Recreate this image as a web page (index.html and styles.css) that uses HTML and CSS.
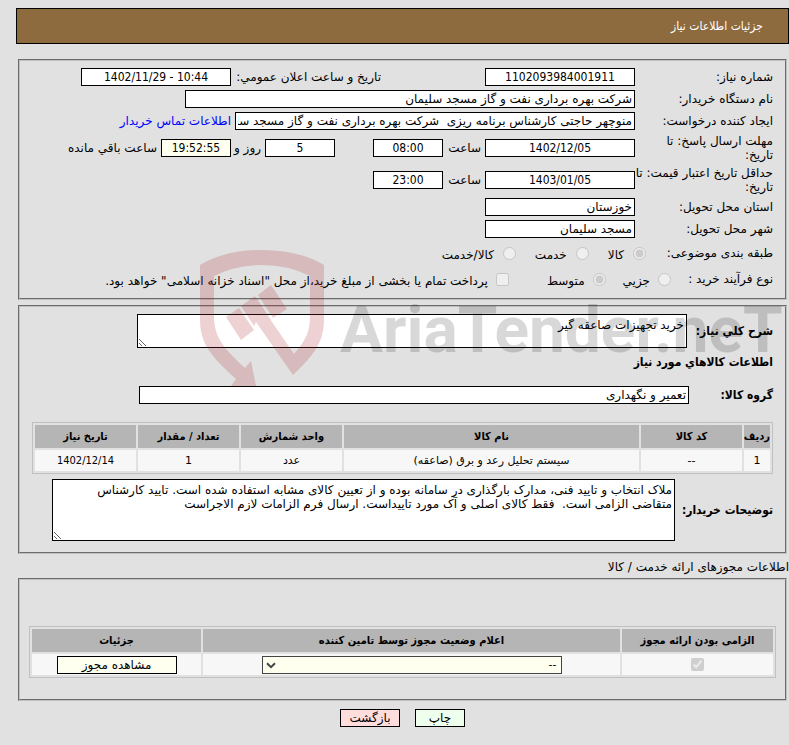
FILE: index.html
```html
<!DOCTYPE html>
<html lang="fa" dir="rtl">
<head>
<meta charset="utf-8">
<title>جزئیات اطلاعات نیاز</title>
<link rel="stylesheet" href="styles.css">
</head>
<body>
<main class="page">
  <h1 class="title">جزئیات اطلاعات نیاز</h1>

  <fieldset class="panel summary">
    <div class="row">
      <label class="name" for="number">شماره نیاز:</label>
      <input class="box date" id="number" value="1102093984001911" readonly>
      <label class="announce" for="announced">تاریخ و ساعت اعلان عمومي:</label>
      <input class="box date" id="announced" value="10:44 - 1402/11/29" dir="rtl" readonly>
    </div>
    <div class="row">
      <label class="name" for="buyer">نام دستگاه خریدار:</label>
      <input class="box buyer" id="buyer" value="شرکت بهره برداری نفت و گاز مسجد سلیمان" readonly>
    </div>
    <div class="row">
      <label class="name" for="creator">ایجاد کننده درخواست:</label>
      <input class="box creator" id="creator" value="منوچهر حاجتی کارشناس برنامه ریزی  شرکت بهره برداری نفت و گاز مسجد سلیمان" readonly>
      <a class="contact" href="#contact">اطلاعات تماس خریدار</a>
    </div>
    <div class="row">
      <label class="name" for="deadline">مهلت ارسال پاسخ: تا تاریخ:</label>
      <input class="box date" id="deadline" value="1402/12/05" readonly>
      <label class="hour" for="deadline-hour">ساعت</label>
      <input class="box short" id="deadline-hour" value="08:00" readonly>
      <input class="box short days" id="days" value="5" aria-label="روز" readonly>
      <label class="and" for="days">روز و</label>
      <input class="box short ivory" id="remaining" value="19:52:55" readonly>
      <label for="remaining">ساعت باقي مانده</label>
    </div>
    <div class="row">
      <label class="name" for="validity">حداقل تاریخ اعتبار قیمت: تا تاریخ:</label>
      <input class="box date" id="validity" value="1403/01/05" readonly>
      <label class="hour" for="validity-hour">ساعت</label>
      <input class="box short" id="validity-hour" value="23:00" readonly>
    </div>
    <div class="row">
      <label class="name" for="province">استان محل تحویل:</label>
      <input class="box place" id="province" value="خوزستان" readonly>
    </div>
    <div class="row">
      <label class="name" for="city">شهر محل تحویل:</label>
      <input class="box place" id="city" value="مسجد سلیمان" readonly>
    </div>
    <div class="row options" role="group" aria-labelledby="subject">
      <span class="subject" id="subject">طبقه بندی موضوعی:</span>
      <label class="option"><input type="radio" name="subject" checked disabled><span>کالا</span></label>
      <label class="option"><input type="radio" name="subject" disabled><span>خدمت</span></label>
      <label class="option"><input type="radio" name="subject" disabled><span>کالا/خدمت</span></label>
    </div>
    <div class="row options process-options" role="group" aria-labelledby="process">
      <span class="process" id="process">نوع فرآیند خرید :</span>
      <label class="option"><input type="radio" name="process" disabled><span>جزیي</span></label>
      <label class="option"><input type="radio" name="process" checked disabled><span>متوسط</span></label>
      <label class="option treasury"><input type="checkbox" disabled><span>پرداخت تمام یا بخشی از مبلغ خرید،از محل "اسناد خزانه اسلامی" خواهد بود.</span></label>
    </div>
  </fieldset>

  <fieldset class="panel goods">
    <div class="wide-row">
      <label class="description-name" for="description">شرح کلي نیاز:</label>
      <textarea class="box description" id="description" readonly>خرید تجهیزات صاعقه گیر</textarea>
    </div>
    <h2 class="subtitle">اطلاعات کالاهاي مورد نیاز</h2>
    <div class="wide-row">
      <label class="group-name" for="group">گروه کالا:</label>
      <input class="box group" id="group" value="تعمیر و نگهداری" readonly>
    </div>
    <table class="grid items">
      <colgroup><col class="c-row"><col class="c-mid"><col><col class="c-mid"><col class="c-mid"><col class="c-mid"></colgroup>
      <thead><tr><th>ردیف</th><th>کد کالا</th><th>نام کالا</th><th>واحد شمارش</th><th>تعداد / مقدار</th><th>تاریخ نیاز</th></tr></thead>
      <tbody><tr><td>1</td><td>--</td><td>سیستم تحلیل رعد و برق (صاعقه)</td><td>عدد</td><td>1</td><td class="digits">1402/12/14</td></tr></tbody>
    </table>
    <div class="wide-row">
      <label class="notes-name" for="notes">توضیحات خریدار:</label>
      <textarea class="box notes" id="notes" readonly>ملاک انتخاب و تایید فنی، مدارک بارگذاری در سامانه بوده و از تعیین کالای مشابه استفاده شده است. تایید کارشناس متقاضی الزامی است.  فقط کالای اصلی و آک مورد تاییداست. ارسال فرم الزامات لازم الاجراست</textarea>
    </div>
  </fieldset>

  <h2 class="section">اطلاعات مجوزهای ارائه خدمت / کالا</h2>
  <fieldset class="panel permits">
    <table class="grid">
      <colgroup><col class="c-required"><col><col class="c-details"></colgroup>
      <thead><tr><th>الزامی بودن ارائه مجوز</th><th>اعلام وضعیت مجوز توسط تامین کننده</th><th>جزئیات</th></tr></thead>
      <tbody><tr>
        <td><input class="tick" type="checkbox" aria-label="الزامی بودن ارائه مجوز" checked disabled></td>
        <td><span class="select-wrap"><select class="box status" aria-label="اعلام وضعیت مجوز"><option>--</option></select><svg class="chevron" viewBox="0 0 10 7" aria-hidden="true"><path d="M1 1.2 5 5.2 9 1.2"/></svg></span></td>
        <td><button class="box view" type="button">مشاهده مجوز</button></td>
      </tr></tbody>
    </table>
  </fieldset>

  <div class="actions">
    <button class="box print" type="button">چاپ</button>
    <button class="box back" type="button">بازگشت</button>
  </div>

  <svg class="watermark" viewBox="0 0 600 140" direction="ltr" aria-hidden="true">
    <g class="emblem">
      <path d="M0 15Q25 0 62 0T124 15V68C124 92 115 104 93 125L56 72 70 69 94 104C106 90 110 82 110 66V26Q88 15 62 15T14 26V66C14 86 22 97 45 118L51 111 56 136H31L36 129C7 103 0 91 0 68Z"/>
      <path d="M26 67 39 58 54 80 41 90ZM41 56 55 46 71 70 56 72 54 76ZM58 45 71 35 87 59 73 68Z"/>
    </g>
    <text class="wordmark" x="140" y="102">AriaTender.neT</text>
  </svg>
</main>
</body>
</html>
```
FILE: styles.css
```css
* { box-sizing: border-box; }

body {
  margin: 0;
  background: #e1e1e1;
  color: #000;
  font: 12px/14px "DejaVu Sans", sans-serif;
}

.page {
  position: relative;
  padding: 8px 0 18px 16px;
  overflow: hidden;
}

input, textarea, select, button { font: inherit; color: inherit; }

.title, .date, .short, .digits, .wide-row label, .subtitle, .grid th {
  font-family: "DejaVu Sans Condensed", "DejaVu Sans", sans-serif;
}

.title {
  margin: 0;
  padding: 10px 25px;
  border: 1px solid #000;
  background: #8e6b3f;
  color: #fff;
  font-size: 12px;
  font-weight: normal;
  line-height: 14px;
}

.panel {
  min-width: 0;
  margin: 0 2px;
  border: 2px groove #c0c0c0;
}

.summary {
  display: flex;
  flex-direction: column;
  gap: 4px;
  margin-top: 15px;
  padding: 7px 12px 8px;
}

.row { display: flex; align-items: center; gap: 4px; white-space: nowrap; }
.name { flex: none; width: 138px; margin-left: -4px; white-space: normal; }

.box {
  height: 18px;
  margin: 0;
  padding: 0 2px;
  border: 1px solid #000;
  border-radius: 0;
  background: #fff;
}

.date { width: 150px; text-align: center; }
.place { width: 150px; }
.buyer { width: 450px; }
.creator { width: 400px; }
.short { width: 70px; text-align: center; }
.days { margin-right: 34px; }
.ivory { background: #fffff0; }
.hour { width: 34px; }
.and { width: 26px; }
.announce { width: 146px; margin-right: 100px; }
.contact { color: #00f; text-decoration: none; }

.options { height: 22px; gap: 19px; }
.process-options { gap: 17px; }
.subject { width: 108px; }
.process { width: 85px; }
.option { display: flex; align-items: center; gap: 9px; }
.process-options .option { gap: 8px; }
.option input { width: 13px; height: 13px; margin: 0; }
.option span { padding-top: 4px; }
.treasury { margin-right: 21px; }

.goods { margin-top: 5px; padding: 7px 12px 11px; }
.wide-row { display: flex; align-items: center; gap: 4px; }
.wide-row label { flex: none; font-weight: bold; }
textarea.box { padding: 3px 2px; resize: both; }
.description-name { width: 82px; }
.description { width: 550px; height: 34px; }
.notes-name { width: 94px; }
.notes { flex: 1; height: 62px; margin-left: 20px; }
.subtitle { margin: 7px 0 17px; font-size: 12px; line-height: 14px; }
.group-name { width: 80px; }
.group { width: 550px; }

.grid {
  table-layout: fixed;
  width: 100%;
  border: 1px solid #c0c0c0;
  border-spacing: 2px;
  font-size: 11px;
  text-align: center;
}
.grid th { height: 23px; padding: 0; background: #b5b5b5; }
.grid td { height: 21px; padding: 0; background: #f7f7f7; }
.items { margin: 18px 0 5px; }
.c-row { width: 26px; }
.c-mid { width: 101px; }
.c-required { width: 151px; }
.c-details { width: 169px; }

.section { margin: 6px 0 4px; font-size: 12px; font-weight: normal; line-height: 14px; }
.permits { padding: 46px 9px 21px; }
.tick { display: block; width: 13px; height: 13px; margin: 0 auto; }
.select-wrap { position: relative; display: block; width: 300px; margin: 0 auto; }
.status { display: block; width: 100%; padding: 0 4px; border-color: #444; background: #fffff0; appearance: none; }
.chevron { position: absolute; left: 4px; top: 6px; width: 10px; height: 7px; fill: none; stroke: #444; stroke-width: 2; pointer-events: none; }
.view { display: block; width: 120px; margin: 0 auto; background: #fffff0; font-size: 12px; }

.actions { display: flex; justify-content: center; gap: 15px; margin-top: 8px; }
.print { width: 50px; background: #efe; }
.back { width: 60px; background: #fdd; }

.watermark {
  position: absolute;
  top: 250px;
  left: 200px;
  width: 600px;
  height: 140px;
  pointer-events: none;
}
.emblem { fill: #b0222a; opacity: .2; }
.wordmark { fill: #000; opacity: .15; font: bold 64px Roboto, sans-serif; }
```
